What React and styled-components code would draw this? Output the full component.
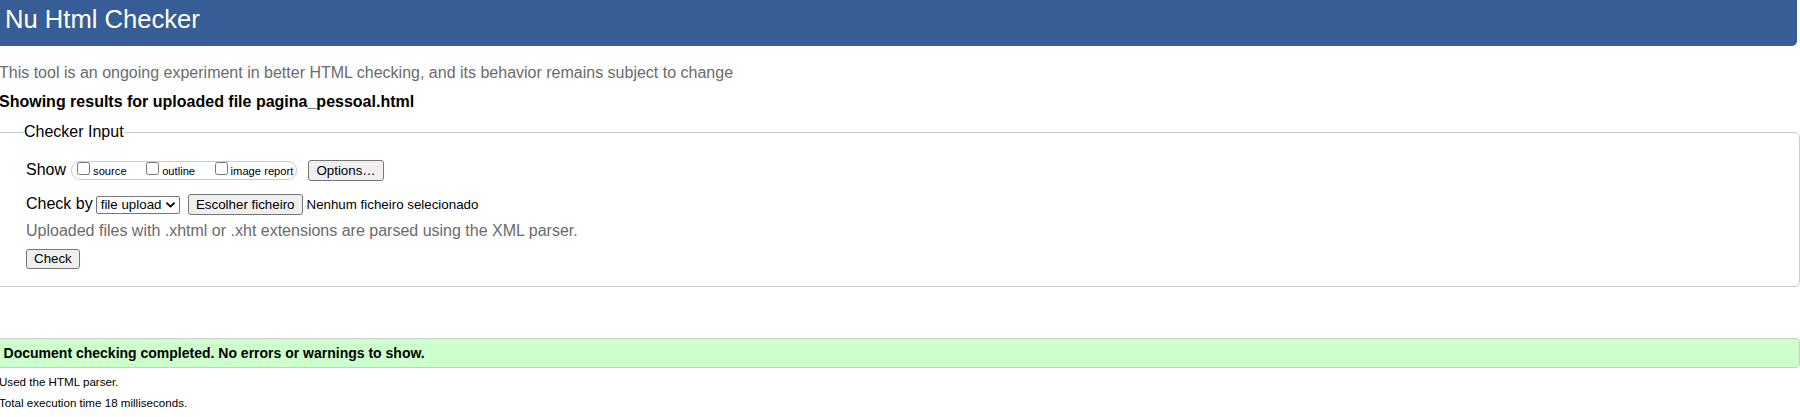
import React from "react";
import styled, { createGlobalStyle } from "styled-components";

const GlobalStyle = createGlobalStyle`
  html, body {
    margin: 0;
    padding: 0;
    background: #fff;
    overflow: hidden;
  }
  body {
    font-family: "Liberation Sans", Arial, sans-serif;
    font-size: 16px;
    color: #000;
  }
`;

const Page = styled.div`
  margin-left: -12px;
`;

const Header = styled.h1`
  margin: 0 3px 0 0;
  height: 46px;
  box-sizing: border-box;
  padding: 4px 0 0 17px;
  background: #365d95;
  color: #fff;
  font-size: 25.6px;
  font-weight: normal;
  line-height: 30px;
  border-radius: 0 0 5px 5px;
`;

const Intro = styled.p`
  margin: 18px 0 0;
  padding-left: 11px;
  line-height: 18px;
  color: #6b6b6b;
`;

const ResultsTitle = styled.h2`
  margin: 11px 0 0;
  padding-left: 11px;
  font-size: 16px;
  font-weight: bold;
  line-height: 18px;
`;

const Fieldset = styled.fieldset`
  margin: 12px 0 0;
  min-width: 0;
  padding: 19px 0 17px 37px;
  border: 1px solid #ccc;
  border-radius: 5px;
`;

const Legend = styled.legend`
  margin-left: -2px;
  padding: 0;
  font-size: 16px;
  line-height: 18.4px;
`;

const Row = styled.div`
  display: flex;
  align-items: ${(p) => (p.$baseline ? "baseline" : "flex-start")};
  margin-top: ${(p) => p.$top || 0}px;
`;

const RowLabel = styled.span`
  font-size: 16px;
  line-height: 18px;
  margin-top: ${(p) => p.$top || 0}px;
  margin-right: ${(p) => p.$gap}px;
`;

const ToggleGroup = styled.span`
  display: flex;
  align-items: flex-start;
  box-sizing: border-box;
  height: 19px;
  margin-top: 1px;
  padding: 0 3px 0 1px;
  border: 1px solid #ccc;
  border-radius: 9px;
`;

const Toggle = styled.label`
  display: flex;
  align-items: flex-start;
  margin-right: ${(p) => (p.$last ? 0 : 15.5)}px;
`;

const Checkbox = styled.input.attrs({ type: "checkbox" })`
  width: 13px;
  height: 13px;
  margin: 0 3px 0 4px;
  flex: none;
`;

const ToggleText = styled.span`
  font-size: 11.2px;
  line-height: 13px;
  margin-top: 2.8px;
`;

const Button = styled.button`
  box-sizing: border-box;
  height: ${(p) => p.$h || 21}px;
  margin-left: ${(p) => p.$left || 0}px;
  padding: 0 7px;
  border: 1px solid #767676;
  border-radius: 3px;
  background: #efefef;
  color: #000;
  font-family: "Liberation Sans", Arial, sans-serif;
  font-size: 13.33px;
  line-height: ${(p) => (p.$h || 21) - 2}px;
  white-space: nowrap;
`;

const SelectBox = styled.span`
  display: inline-flex;
  align-items: center;
  box-sizing: border-box;
  height: 18px;
  padding: 0 4px;
  border: 1px solid #767676;
  border-radius: 2px;
  background: #fff;
  font-size: 13.33px;
  line-height: 16px;
  gap: 4.5px;
  align-self: center;
  margin-top: 1px;
`;

const Chevron = () => (
  <svg width="9" height="6" viewBox="0 0 9 6" aria-hidden="true">
    <path d="M1 1.2 L4.5 4.6 L8 1.2" fill="none" stroke="#000" strokeWidth="1.8" strokeLinecap="round" strokeLinejoin="round" />
  </svg>
);

const FileStatus = styled.span`
  margin-left: 4px;
  font-size: 13.33px;
  line-height: 15px;
`;

const Note = styled.p`
  margin: 7px 0 9px;
  line-height: 18px;
  color: #6b6b6b;
`;

const Success = styled.p`
  margin: 51px 0 0;
  padding: 6px 0 6px 14.6px;
  border: 1px solid #ccc;
  border-radius: 4px;
  background: #ccffcc;
  font-size: 14px;
  font-weight: bold;
  line-height: 16px;
`;

const Details = styled.div`
  display: flex;
  flex-direction: column;
  gap: 8px;
  margin-top: 7px;
  padding-left: 11px;
`;

const Detail = styled.p`
  margin: 0;
  font-size: 11.6px;
  line-height: 13px;
`;

export default function App() {
  return (
    <>
      <GlobalStyle />
      <Page>
        <Header>Nu Html Checker</Header>
        <Intro>
          This tool is an ongoing experiment in better HTML checking, and its behavior remains subject to change
        </Intro>
        <ResultsTitle>Showing results for uploaded file pagina_pessoal.html</ResultsTitle>
        <Fieldset>
          <Legend>Checker Input</Legend>
          <Row>
            <RowLabel $top={1} $gap={5}>Show</RowLabel>
            <ToggleGroup>
              <Toggle>
                <Checkbox />
                <ToggleText>source</ToggleText>
              </Toggle>
              <Toggle>
                <Checkbox />
                <ToggleText>outline</ToggleText>
              </Toggle>
              <Toggle $last>
                <Checkbox />
                <ToggleText>image report</ToggleText>
              </Toggle>
            </ToggleGroup>
            <Button $left={11}>Options…</Button>
          </Row>
          <Row $baseline $top={13}>
            <RowLabel $gap={3}>Check by</RowLabel>
            <SelectBox>
              file upload
              <Chevron />
            </SelectBox>
            <Button $left={8}>Escolher ficheiro</Button>
            <FileStatus>Nenhum ficheiro selecionado</FileStatus>
          </Row>
          <Note>Uploaded files with .xhtml or .xht extensions are parsed using the XML parser.</Note>
          <Button $h={20}>Check</Button>
        </Fieldset>
        <Success>Document checking completed. No errors or warnings to show.</Success>
        <Details>
          <Detail>Used the HTML parser.</Detail>
          <Detail>Total execution time 18 milliseconds.</Detail>
        </Details>
      </Page>
    </>
  );
}
